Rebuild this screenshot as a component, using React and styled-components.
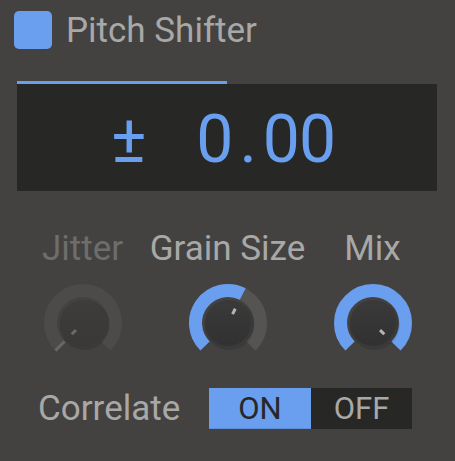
import React from "react";
import styled, { createGlobalStyle } from "styled-components";

const Global = createGlobalStyle`
  html, body { margin: 0; padding: 0; background: #434241; }
  body { font-family: Roboto, "Liberation Sans", sans-serif; }
`;

const BLUE = "#6a9eee";

const Panel = styled.div`
  width: 455px;
  height: 461px;
  background: #434241;
  box-sizing: border-box;
  overflow: hidden;
`;

const Header = styled.div`
  display: flex;
  align-items: flex-start;
  gap: 14px;
  padding: 11px 0 0 14px;
`;

const Check = styled.div`
  width: 38px;
  height: 38px;
  border-radius: 5px;
  background: ${BLUE};
`;

const Title = styled.div`
  font-size: 35px;
  line-height: 38px;
  margin-top: 1px;
  color: #a8a8a7;
  white-space: nowrap;
`;

const Display = styled.div`
  margin: 31px 0 0 17px;
  width: 420px;
  height: 110px;
  display: flex;
  flex-direction: column;
`;

const Bar = styled.div`
  height: 3px;
  background: ${BLUE};
  flex: none;
`;

const Screen = styled.div`
  flex: 1;
  background: #272726;
  display: flex;
  align-items: center;
  justify-content: center;
  gap: 50px;
  padding: 4px 8px 0 0;
  color: ${BLUE};
  font-size: 66px;
  line-height: 1;
`;

const Sign = styled.span``;

const Number = styled.span`
  display: flex;
  letter-spacing: -1px;
`;

const Dot = styled.span`
  margin: 0 7px;
`;

const Knobs = styled.div`
  display: grid;
  grid-template-columns: repeat(3, 145px);
  padding: 38px 10px 0;
  row-gap: 14px;
`;

const Label = styled.div`
  display: flex;
  justify-content: center;
  white-space: nowrap;
  font-size: 35px;
  line-height: 40px;
  color: ${(p) => (p.$disabled ? "#6d6d6c" : "#a8a8a7")};
`;

const KnobCell = styled.div`
  display: flex;
  justify-content: center;
`;

const ToggleRow = styled.div`
  display: flex;
  align-items: center;
  gap: 29px;
  padding: 25px 0 0 38px;
`;

const ToggleLabel = styled.div`
  font-size: 35px;
  line-height: 40px;
  color: #a8a8a7;
  white-space: nowrap;
`;

const Toggle = styled.div`
  display: flex;
  width: 203px;
  height: 41px;
  background: #272726;
`;

const Seg = styled.div`
  flex: 1;
  display: flex;
  align-items: center;
  justify-content: center;
  font-size: 31px;
  padding-top: 1px;
  box-sizing: border-box;
  background: ${(p) => (p.$on ? BLUE : "#272726")};
  color: ${(p) => (p.$on ? "#272726" : "#a8a8a7")};
  border-bottom: 1px solid ${(p) => (p.$on ? "#5e8ed6" : "#272726")};
`;

const pt = (cx, cy, r, a) => {
  const rad = (a * Math.PI) / 180;
  return [cx + r * Math.sin(rad), cy - r * Math.cos(rad)];
};

const arc = (cx, cy, r, a0, a1) => {
  const [x0, y0] = pt(cx, cy, r, a0);
  const [x1, y1] = pt(cx, cy, r, a1);
  const large = a1 - a0 > 180 ? 1 : 0;
  return `M ${x0} ${y0} A ${r} ${r} 0 ${large} 1 ${x1} ${y1}`;
};

function Knob({ value, disabled, id }) {
  const c = 40;
  const r = 32.5;
  const a = -135 + 270 * value;
  const [ix0, iy0] = pt(c, c, 10, a);
  const [ix1, iy1] = pt(c, c, 16, a);
  const [sx0, sy0] = pt(c, c, 26, -135);
  const [sx1, sy1] = pt(c, c, 39, -135);
  return (
    <svg width="80" height="80" viewBox="0 0 80 80">
      <defs>
        <linearGradient id={id} x1="0" y1="0" x2="0" y2="1">
          <stop offset="0" stopColor={disabled ? "#3e3d3c" : "#3b3a3a"} />
          <stop offset="1" stopColor={disabled ? "#393837" : "#323131"} />
        </linearGradient>
      </defs>
      <path d={arc(c, c, r, -135, 135)} fill="none" stroke={disabled ? "#4c4b4a" : "#555453"} strokeWidth="13" />
      {value > 0 && (
        <path d={arc(c, c, r, -135, a)} fill="none" stroke={BLUE} strokeWidth="13" />
      )}
      {disabled && (
        <line x1={sx0} y1={sy0} x2={sx1} y2={sy1} stroke="#666665" strokeWidth="3" />
      )}
      <circle cx={c + 1.5} cy={c + 2} r="25" fill="rgba(0,0,0,0.12)" />
      <circle cx={c} cy={c} r="23" fill={`url(#${id})`} />
      <line x1={ix0} y1={iy0} x2={ix1} y2={iy1} stroke={disabled ? "#6a6a69" : "#b4b4b3"} strokeWidth="3" />
    </svg>
  );
}

export default function App() {
  return (
    <Panel>
      <Global />
      <Header>
        <Check />
        <Title>Pitch Shifter</Title>
      </Header>
      <Display>
        <Bar style={{ width: "50%" }} />
        <Screen>
          <Sign>±</Sign>
          <Number>
            <span>0</span>
            <Dot>.</Dot>
            <span>00</span>
          </Number>
        </Screen>
      </Display>
      <Knobs>
        <Label $disabled>Jitter</Label>
        <Label>Grain Size</Label>
        <Label>Mix</Label>
        <KnobCell>
          <Knob id="k1" value={0} disabled />
        </KnobCell>
        <KnobCell>
          <Knob id="k2" value={0.6} />
        </KnobCell>
        <KnobCell>
          <Knob id="k3" value={1} />
        </KnobCell>
      </Knobs>
      <ToggleRow>
        <ToggleLabel>Correlate</ToggleLabel>
        <Toggle>
          <Seg $on>ON</Seg>
          <Seg>OFF</Seg>
        </Toggle>
      </ToggleRow>
    </Panel>
  );
}
